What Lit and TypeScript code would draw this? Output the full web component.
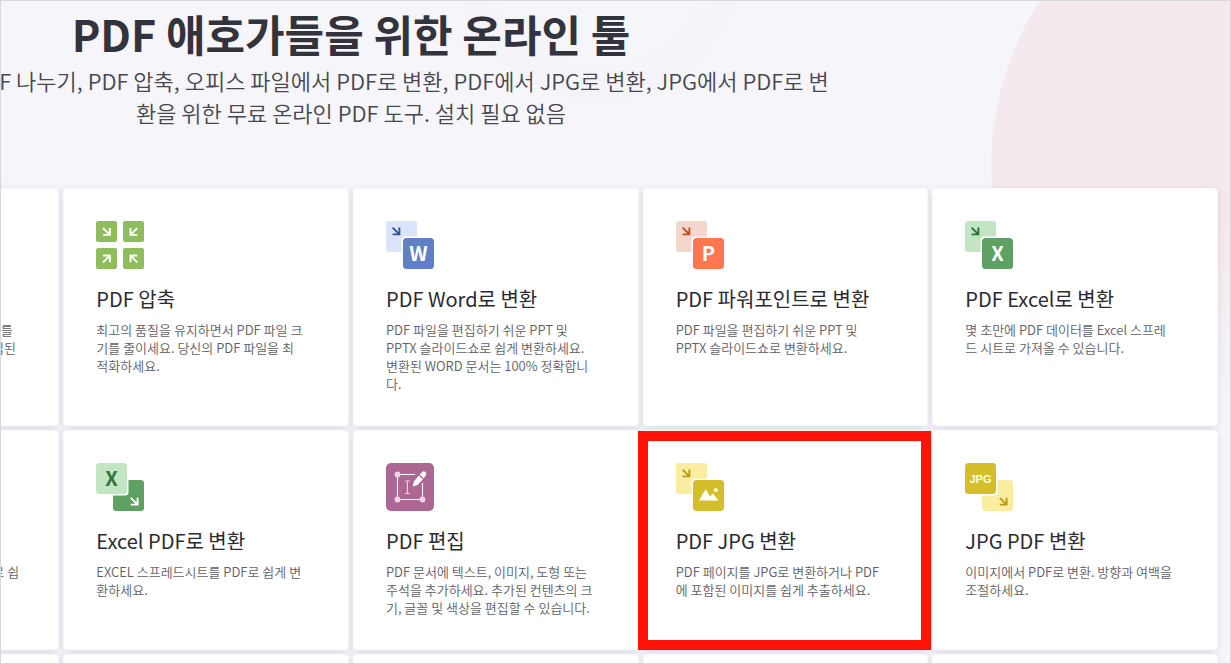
import { LitElement, html, svg, css, nothing, type TemplateResult } from "lit";
import { customElement, property } from "lit/decorators.js";

interface Tool {
  title: string;
  text: string;
  icon: string;
  marked?: boolean;
}

const tools: Tool[] = [
  { title: "PDF 합치기", text: "PDF를 원하는 순서대로 합치세요.", icon: "" },
  { title: "PDF 나누기", text: "PDF 파일에서 하나 또는 전체 페이지를\n각 페이지를 쉽게 분리하세요. 또 독립된\nPDF 파일로 저장하세요.", icon: "" },
  { title: "PDF 압축", text: "최고의 품질을 유지하면서 PDF 파일 크\n기를 줄이세요. 당신의 PDF 파일을 최\n적화하세요.", icon: "compress" },
  { title: "PDF Word로 변환", text: "PDF 파일을 편집하기 쉬운 PPT 및\nPPTX 슬라이드쇼로 쉽게 변환하세요.\n변환된 WORD 문서는 100% 정확합니\n다.", icon: "word" },
  { title: "PDF 파워포인트로 변환", text: "PDF 파일을 편집하기 쉬운 PPT 및\nPPTX 슬라이드쇼로 변환하세요.", icon: "ppt" },
  { title: "PDF Excel로 변환", text: "몇 초만에 PDF 데이터를 Excel 스프레\n드 시트로 가져올 수 있습니다.", icon: "excel" },
  { title: "Word PDF로 변환", text: "DOC 및 DOCX 파일을 PDF로 쉽게\n변환하세요.", icon: "" },
  { title: "파워포인트 PDF로 변환", text: "PPT 및 PPTX 슬라이드쇼들을 PDF로 쉽\n게 변환하세요.", icon: "" },
  { title: "Excel PDF로 변환", text: "EXCEL 스프레드시트를 PDF로 쉽게 변\n환하세요.", icon: "toPdf" },
  { title: "PDF 편집", text: "PDF 문서에 텍스트, 이미지, 도형 또는\n주석을 추가하세요. 추가된 컨텐츠의 크\n기, 글꼴 및 색상을 편집할 수 있습니다.", icon: "edit" },
  { title: "PDF JPG 변환", text: "PDF 페이지를 JPG로 변환하거나 PDF\n에 포함된 이미지를 쉽게 추출하세요.", icon: "image", marked: true },
  { title: "JPG PDF 변환", text: "이미지에서 PDF로 변환. 방향과 여백을\n조절하세요.", icon: "jpg" },
  { title: "PDF 서명", text: "전자 서명을 추가하세요.", icon: "" },
  { title: "워터마크", text: "PDF에 워터마크를 추가하세요.", icon: "" },
  { title: "PDF 회전", text: "PDF를 원하는 대로 회전하세요.", icon: "" },
  { title: "HTML PDF로 변환", text: "웹페이지를 PDF로 변환하세요.", icon: "" },
  { title: "PDF 잠금해제", text: "PDF 비밀번호를 제거하세요.", icon: "" },
  { title: "PDF 보호", text: "PDF 파일을 암호로 보호하세요.", icon: "" },
];

/* Arrow pointing down-right, centred on (x, y); turn rotates it. */
const arrow = (x: number, y: number, color: string, turn = 0) => svg`
  <path d="M-3.6 -3.6L3 3M3.2 -3.6V3.2H-3.6" transform="translate(${x} ${y}) rotate(${turn})"
    fill="none" stroke=${color} stroke-width="1.9"></path>`;

/* Source sheet at top left, result sheet overlapping it at bottom right. */
const convertFrom = (pale: string, mark: string, solid: string, glyph: unknown) => svg`
  <path d="M3 0H28a3 3 0 0 1 3 3V15.500H19a3.500 3.500 0 0 0 -3.500 3.500V31H3a3 3 0 0 1 -3 -3V3a3 3 0 0 1 3 -3Z" fill=${pale}></path>
  ${arrow(10.2, 10.2, mark)}
  <rect x="17" y="17" width="31" height="31" rx="3.500" fill=${solid}></rect>
  ${glyph}`;

const convertTo = (front: string, back: string, mark: string, glyph: unknown) => svg`
  <path d="M32.500 17H45a3 3 0 0 1 3 3V45a3 3 0 0 1 -3 3H20a3 3 0 0 1 -3 -3V32.500H29a3.500 3.500 0 0 0 3.500 -3.500Z" fill=${back}></path>
  ${arrow(38.4, 38.4, mark)}
  <rect width="31" height="31" rx="3.500" fill=${front}></rect>
  ${glyph}`;

const letter = (x: number, y: number, color: string, text: string) => svg`
  <text class="letter" x=${x} y=${y} fill=${color}>${text}</text>`;

const icons: Record<string, () => TemplateResult | unknown> = {
  compress: () => svg`
    <g fill="#8fbc5d">
      <rect width="21" height="21" rx="2"></rect>
      <rect x="27" width="21" height="21" rx="2"></rect>
      <rect y="27" width="21" height="21" rx="2"></rect>
      <rect x="27" y="27" width="21" height="21" rx="2"></rect>
    </g>
    ${arrow(10.7, 10.7, "#fff")}
    ${arrow(37.7, 10.7, "#fff", 90)}
    ${arrow(10.7, 37.7, "#fff", -90)}
    ${arrow(37.7, 37.7, "#fff", 180)}`,
  word: () => convertFrom("#dbe4f8", "#2f5591", "#6080c6", letter(32.5, 40, "#fff", "W")),
  ppt: () => convertFrom("#f2d7ca", "#c14a2b", "#ff7651", letter(32.5, 40, "#fff", "P")),
  excel: () => convertFrom("#c2e6c4", "#2f7039", "#5ea162", letter(32.5, 40, "#fff", "X")),
  toPdf: () => convertTo("#c2e6c4", "#5ea162", "#fff", letter(15.5, 23, "#347440", "X")),
  image: () => convertFrom("#f9eda2", "#b89d10", "#d4bf2b", svg`
    <path d="M23 37.500L29.600 26.200L34.200 33.700L36.700 30.300L42.500 37.500Z" fill="#fff"></path>
    <circle cx="39.800" cy="27.200" r="2.100" fill="#fff7c9"></circle>`),
  jpg: () => convertTo("#d4bf2b", "#f9eda2", "#b89d10", svg`
    <text class="tag" x="15.500" y="19.500" fill="#fffbe0">JPG</text>`),
  edit: () => svg`
    <rect width="48" height="48" rx="5" fill="#ac6892"></rect>
    <path d="M29 11.500H11.500V36.500H36.500V20" fill="none" stroke="#fff" stroke-width="1.100"></path>
    <g fill="#f1d3e7">
      <circle cx="11.500" cy="11.500" r="2.900"></circle>
      <circle cx="11.500" cy="36.500" r="2.900"></circle>
      <circle cx="36.500" cy="36.500" r="2.900"></circle>
    </g>
    <path d="M19 18H23.800M21.400 18V30.500M19 30.500H23.800" fill="none" stroke="#f1d3e7" stroke-width="1.100"></path>
    <path d="M26.700 23.500L28 18.200L33 12.400L36.900 16.200L31.600 21.900Z" fill="#fff"></path>
    <path d="M33.800 11.600L36 9.200A2.300 2.300 0 0 1 39.600 12.500L37.700 15.400Z" fill="#fff"></path>`,
};

@customElement("tool-card")
class ToolCard extends LitElement {
  @property({ attribute: false }) tool!: Tool;

  static styles = css`
    :host {
      display: block;
      position: relative;
      min-width: 0;
    }
    .card {
      display: block;
      box-sizing: border-box;
      height: 100%;
      padding: 32px;
      border: 1px solid #fafafc;
      border-radius: 4px;
      background: #fff;
      box-shadow: 0 2px 8px rgba(30, 30, 60, 0.1);
      color: inherit;
      text-decoration: none;
    }
    .icon {
      display: block;
      width: 48px;
      height: 48px;
    }
    .letter {
      font: bold 20px "Noto Sans CJK KR", sans-serif;
      text-anchor: middle;
    }
    .tag {
      font: bold 11px "Liberation Sans", sans-serif;
      text-anchor: middle;
    }
    .title {
      margin: 16px 0 8px;
      font-size: 20px;
      font-weight: 400;
      line-height: 28px;
      color: #2b2b33;
      white-space: nowrap;
    }
    .text {
      margin: 0;
      font-size: 13px;
      font-weight: 350;
      line-height: 18px;
      color: #606068;
      white-space: pre;
    }
    .marker {
      position: absolute;
      inset: 1px -3px 0 -5px;
      z-index: 1;
      border: 10px solid #ff1208;
      pointer-events: none;
    }
  `;

  render() {
    const icon = icons[this.tool.icon];
    return html`
      <a class="card" href="#">
        <svg class="icon" viewBox="0 0 48 48" aria-hidden="true">${icon ? icon() : nothing}</svg>
        <h3 class="title">${this.tool.title}</h3>
        <p class="text">${this.tool.text}</p>
      </a>
      ${this.tool.marked ? html`<div class="marker"></div>` : nothing}
    `;
  }
}

@customElement("app-root")
class AppRoot extends LitElement {
  static styles = css`
    :host {
      display: block;
      box-sizing: border-box;
      height: 100vh;
      overflow: hidden;
      border: 1px solid #d7d7dc;
      background:
        linear-gradient(to bottom, transparent 220px, #f5f5fa 400px),
        radial-gradient(circle 302px at calc(100% + 63px) 164px, #f4e9ee 301px, transparent 302px),
        radial-gradient(circle 142px at 598px -42px, #f5f5fa 100px, #f4f3f8 141px, transparent 142px),
        #f5f5fa;
      font-family: "Noto Sans CJK KR", sans-serif;
    }
    .page {
      margin: 0 12px 0 -517px;
      padding-top: 8px;
    }
    .head {
      text-align: center;
    }
    .headline {
      margin: 0;
      font-size: 43px;
      font-weight: 700;
      line-height: 48px;
      color: #33333b;
    }
    .lead {
      max-width: 1000px;
      margin: 7px auto 60px;
      font-size: 22px;
      font-weight: 350;
      line-height: 32px;
      color: #47474f;
    }
    .tools {
      display: grid;
      grid-template-columns: repeat(6, minmax(0, 1fr));
      gap: 4px;
    }
  `;

  render() {
    return html`
      <main class="page">
        <header class="head">
          <h1 class="headline">PDF 애호가들을 위한 온라인 툴</h1>
          <p class="lead">
            PDF 병합, PDF 나누기, PDF 압축, 오피스 파일에서 PDF로 변환, PDF에서 JPG로 변환, JPG에서 PDF로 변<br />환을
            위한 무료 온라인 PDF 도구. 설치 필요 없음
          </p>
        </header>
        <section class="tools">
          ${tools.map((tool) => html`<tool-card .tool=${tool}></tool-card>`)}
        </section>
      </main>
    `;
  }
}
